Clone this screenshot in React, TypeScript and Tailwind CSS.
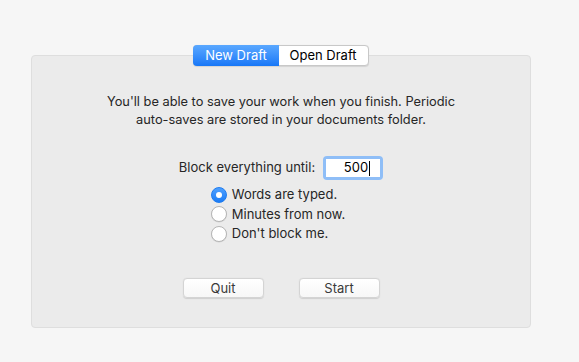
import React, { useState } from 'react';

const font = { fontFamily: 'Inter, "Liberation Sans", Arial, sans-serif' };

const Radio: React.FC<{ checked: boolean; label: string; onClick: () => void }> = ({ checked, label, onClick }) => (
    <button onClick={onClick} className="flex items-center gap-[5px] h-[19.5px] text-[13px] text-[#262626]">
        {checked ? (
            <span className="w-[16px] h-[16px] rounded-full bg-gradient-to-b from-[#4da0ff] to-[#1a7cf5] border border-[#1f7cf0] flex items-center justify-center">
                <span className="w-[6px] h-[6px] rounded-full bg-white" />
            </span>
        ) : (
            <span className="w-[16px] h-[16px] rounded-full bg-white border border-[#b5b5b5] shadow-[0_0.5px_0.5px_rgba(0,0,0,0.1)]" />
        )}
        <span>{label}</span>
    </button>
);

const App: React.FC = () => {
    const [tab, setTab] = useState<'new' | 'open'>('new');
    const [mode, setMode] = useState(0);
    const count = '500';

    const modes = ['Words are typed.', "Minutes from now.", "Don't block me."];

    return (
        <div className="w-[579px] h-[362px] bg-[#f6f6f6] pt-[45px] pl-[31px]" style={font}>
            {/* Tabs */}
            <div className="w-[500px] flex justify-center relative z-10">
                <div className="flex h-[21px] rounded-[4px] border border-[#c8c8c8] bg-white shadow-[0_0.5px_1px_rgba(0,0,0,0.1)] text-[13px]">
                    <button
                        onClick={() => setTab('new')}
                        className={tab === 'new'
                            ? 'w-[86px] -m-px h-[21px] rounded-l-[4px] bg-gradient-to-b from-[#5aa8ff] to-[#1677f7] text-white'
                            : 'w-[86px] text-black'}
                    >
                        New Draft
                    </button>
                    <button
                        onClick={() => setTab('open')}
                        className={tab === 'open'
                            ? 'w-[91px] -m-px h-[21px] rounded-r-[4px] bg-gradient-to-b from-[#5aa8ff] to-[#1677f7] text-white'
                            : 'w-[90px] text-black'}
                    >
                        Open Draft
                    </button>
                </div>
            </div>

            {/* Panel */}
            <div className="-mt-[11px] w-[500px] h-[273px] rounded-[4px] bg-[#ebebeb] border border-[#dedede] flex flex-col items-center pt-[37px] text-[#262626]">
                <p className="text-[12.8px] leading-[18px] text-center">
                    You'll be able to save your work when you finish. Periodic<br />
                    auto-saves are stored in your documents folder.
                </p>

                <div className="mt-[27px] flex items-center gap-[8px] text-[13px]">
                    <span>Block everything until:</span>
                    <div className="rounded-[4px] p-[3px] bg-[#8fbef7]">
                        <div className="w-[54px] h-[18px] bg-white flex items-center justify-end pr-[10px] text-[13px] text-black">
                            <span>{count}</span>
                            <span className="w-px h-[15px] bg-black ml-[1px]" />
                        </div>
                    </div>
                </div>

                <div className="mt-[5px] flex flex-col items-start ml-[-6px]">
                    {modes.map((m, i) => (
                        <Radio key={m} label={m} checked={mode === i} onClick={() => setMode(i)} />
                    ))}
                </div>

                <div className="mt-[34px] flex gap-[35px]">
                    <button className="w-[81px] h-[20px] rounded-[4px] bg-gradient-to-b from-white to-[#f7f7f7] border border-[#d4d4d4] shadow-[0_0.5px_1px_rgba(0,0,0,0.12)] text-[13px] text-[#3a3a3a]">
                        Quit
                    </button>
                    <button className="w-[81px] h-[20px] rounded-[4px] bg-gradient-to-b from-white to-[#f7f7f7] border border-[#d4d4d4] shadow-[0_0.5px_1px_rgba(0,0,0,0.12)] text-[13px] text-[#3a3a3a]">
                        Start
                    </button>
                </div>
            </div>
        </div>
    );
};

export default App;
